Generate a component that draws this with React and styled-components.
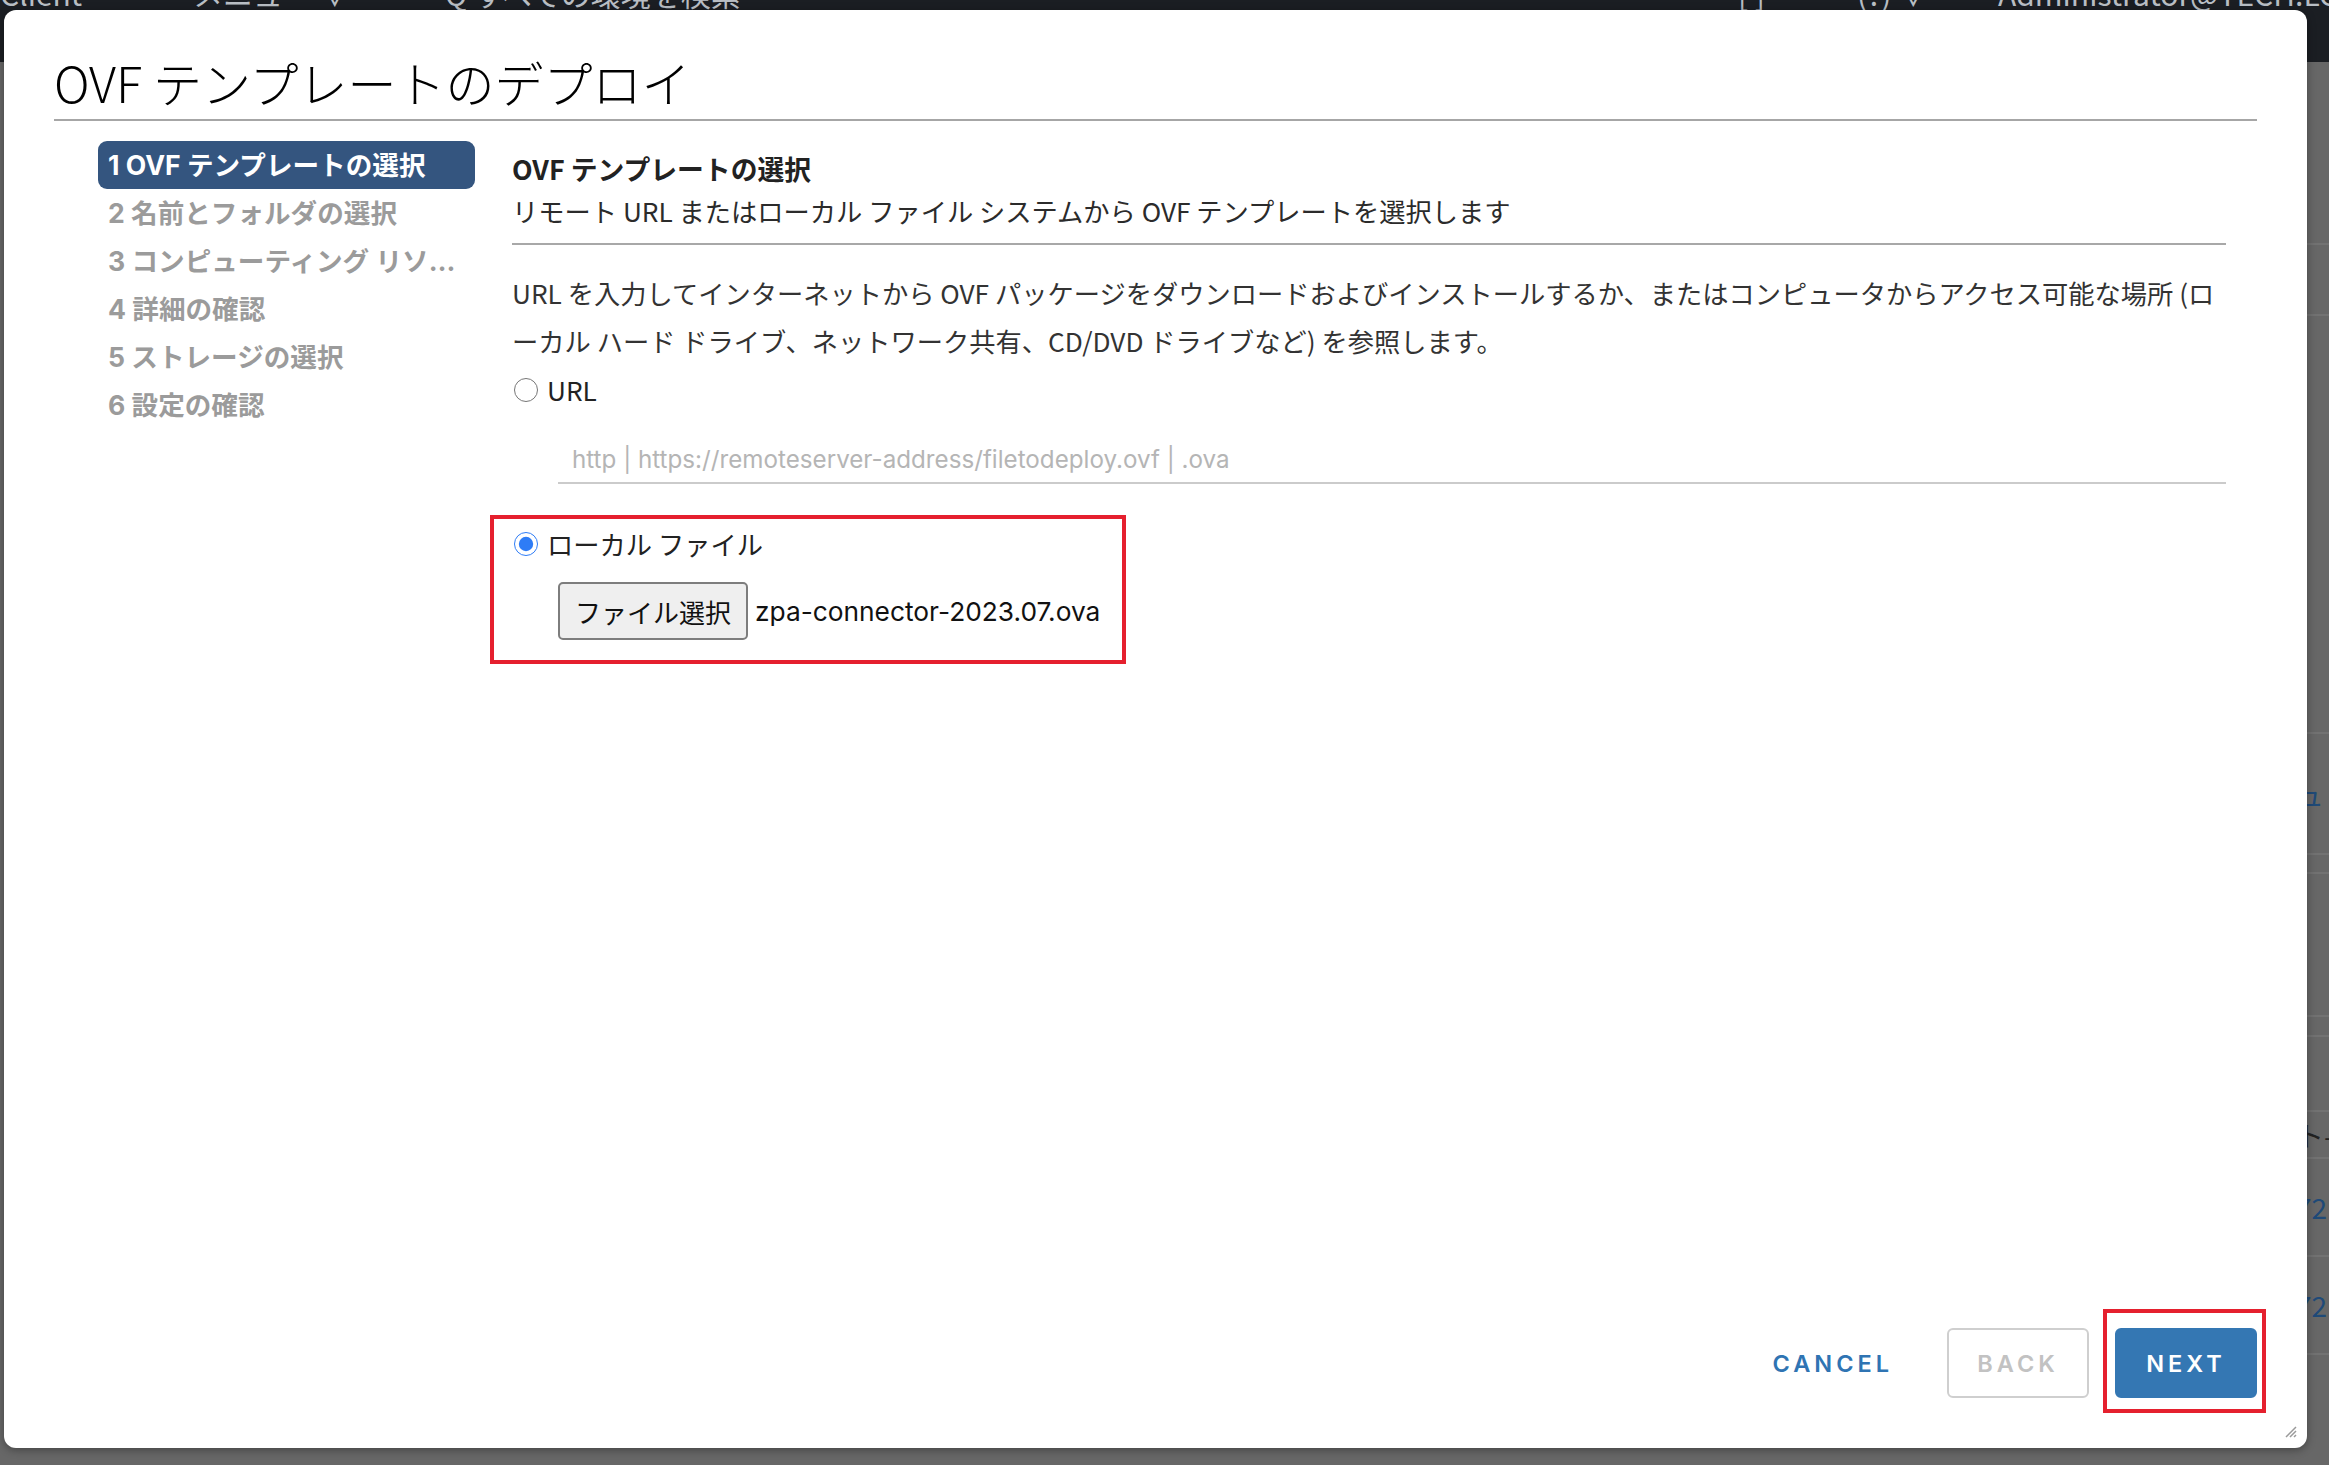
import React from 'react';
import styled, { createGlobalStyle } from 'styled-components';

const GlobalStyle = createGlobalStyle`
  html, body {
    margin: 0;
    padding: 0;
  }
  body {
    width: 2329px;
    height: 1465px;
    overflow: hidden;
    background: #676767;
    font-family: "Noto Sans CJK JP", "Noto Sans", sans-serif;
  }
  * {
    box-sizing: border-box;
  }
`;

const Page = styled.div`
  position: relative;
  width: 2329px;
  height: 1465px;
  display: flex;
  flex-direction: column;
`;

const TopBar = styled.div`
  height: 62px;
  background: #1b1e23;
  display: flex;
  align-items: flex-start;
  overflow: hidden;
  color: #b9bec4;
  font-size: 30px;
  line-height: 30px;
`;

const TopItem = styled.div`
  margin-top: -22px;
  width: ${(p) => (p.w ? `${p.w}px` : 'auto')};
  flex-shrink: 0;
  white-space: nowrap;
`;

const Backdrop = styled.div`
  flex: 1;
  display: flex;
  flex-direction: column;
  padding-left: 2296px;
  color: #1f4a78;
  font-size: 28px;
`;

const BgRow = styled.div`
  height: ${(p) => p.h}px;
  border-bottom: 2px solid #727272;
  display: flex;
  align-items: center;
  white-space: nowrap;
  color: ${(p) => (p.dark ? '#222' : '#1f4a78')};
`;

const Modal = styled.div`
  position: absolute;
  left: 4px;
  top: 10px;
  width: 2303px;
  height: 1438px;
  background: #fff;
  border-radius: 12px;
  box-shadow: 0 2px 8px rgba(0, 0, 0, 0.35);
  padding: 0 50px;
  display: flex;
  flex-direction: column;
`;

const ModalHeader = styled.div`
  padding-top: 45px;
  padding-bottom: 11px;
  border-bottom: 2px solid #a6a6a6;
`;

const Title = styled.h1`
  margin: 0;
  font-size: 49px;
  line-height: 53px;
  font-weight: 300;
  color: #000;
`;

const ModalBody = styled.div`
  display: flex;
  padding-top: 20px;
`;

const StepNav = styled.ul`
  list-style: none;
  margin: 0 0 0 44px;
  padding: 0;
  width: 377px;
  flex-shrink: 0;
`;

const Step = styled.li`
  height: 48px;
  line-height: 48px;
  padding: 0 3px 0 10px;
  border-radius: 9px;
  font-family: "Inter", "Noto Sans CJK JP", sans-serif;
  font-size: 26.6px;
  font-weight: 700;
  white-space: nowrap;
  overflow: hidden;
  text-overflow: ellipsis;
  color: ${(p) => (p.active ? '#fff' : '#9b9b9b')};
  background: ${(p) => (p.active ? '#34557f' : 'transparent')};
`;

const StepContent = styled.div`
  margin-left: 37px;
  width: 1714px;
  padding-top: 10px;
  color: #2b2b2b;
  font-size: 26.25px;
`;

const Heading = styled.h2`
  margin: 0;
  font-size: 26.8px;
  line-height: 36px;
  font-weight: 700;
  color: #222;
`;

const Subtitle = styled.div`
  margin-top: 6px;
  line-height: 36px;
  padding-bottom: 14px;
  border-bottom: 2px solid #a8a8a8;
`;

const Description = styled.p`
  margin: 24px 0 0;
  line-height: 48px;
  color: #333;
`;

const RadioRow = styled.label`
  height: 40px;
  display: flex;
  align-items: center;
  gap: 9px;
  margin-top: ${(p) => p.top || 0}px;
  margin-left: ${(p) => p.indent || 0}px;
  color: #222;
`;

const Radio = styled.input.attrs({ type: 'radio' })`
  width: 24px;
  height: 24px;
  margin: 0;
  accent-color: #2e7cf6;
`;

const UrlInput = styled.input.attrs({
  type: 'text',
  placeholder: 'http | https://remoteserver-address/filetodeploy.ovf | .ova',
})`
  display: block;
  margin: 26px 0 0 46px;
  width: calc(100% - 46px);
  height: 48px;
  padding: 0 14px;
  border: none;
  border-bottom: 2px solid #cbcbcb;
  font-family: "Inter", sans-serif;
  font-size: 24.2px;
  color: #333;
  background: transparent;
  &::placeholder {
    color: #b5b5b5;
  }
  &:focus {
    outline: none;
  }
`;

const Highlight = styled.div`
  margin: 31px 0 0 -22px;
  width: 636px;
  border: 4px solid #e5202e;
  padding: 5px 20px 20px;
`;

const FileRow = styled.div`
  display: flex;
  align-items: center;
  margin-top: 18px;
  padding-left: 44px;
`;

const FileButton = styled.button`
  height: 58px;
  padding: 0 15px;
  background: #efefef;
  border: 2px solid #7d7d7d;
  border-radius: 5px;
  font-family: "Noto Sans CJK JP", sans-serif;
  font-size: 26px;
  color: #111;
`;

const FileName = styled.span`
  margin-left: 7px;
  font-family: "Inter", "Noto Sans", sans-serif;
  font-size: 26.3px;
  color: #111;
`;

const ModalFooter = styled.div`
  margin-top: auto;
  padding-bottom: 50px;
  display: flex;
  justify-content: flex-end;
  align-items: center;
  gap: 26px;
`;

const Button = styled.button`
  height: 70px;
  min-width: 142px;
  padding: 0 26px;
  border-radius: 6px;
  font-family: "Inter", sans-serif;
  font-size: 23.5px;
  font-weight: 600;
  letter-spacing: 4px;
  border: 2px solid ${(p) => (p.variant === 'primary' ? '#3477b3' : p.variant === 'outline' ? '#cfcfcf' : 'transparent')};
  background: ${(p) => (p.variant === 'primary' ? '#3477b3' : '#fff')};
  color: ${(p) => (p.variant === 'primary' ? '#fff' : p.variant === 'outline' ? '#c2c2c2' : '#2f74b3')};
  cursor: pointer;
`;

const Annotation = styled.div`
  display: inline-flex;
  border: 4px solid #e5202e;
  padding: 15px 5px 11px 8px;
  margin: -19px -9px -15px -12px;
`;

const ResizeGrip = styled.svg`
  position: absolute;
  right: 10px;
  bottom: 10px;
`;

const steps = [
  '1 OVF テンプレートの選択',
  '2 名前とフォルダの選択',
  '3 コンピューティング リソースの選択',
  '4 詳細の確認',
  '5 ストレージの選択',
  '6 設定の確認',
];

export default function App() {
  return (
    <Page>
      <GlobalStyle />
      <TopBar>
        <TopItem w={193}>Client</TopItem>
        <TopItem w={252}>メニュー ∨</TopItem>
        <TopItem w={1293}>Q すべての環境を検索</TopItem>
        <TopItem w={119}>[ ]</TopItem>
        <TopItem w={141}>(?) ∨</TopItem>
        <TopItem>Administrator@TECH.LOCAL</TopItem>
      </TopBar>
      <Backdrop>
        <BgRow h={183} />
        <BgRow h={71} />
        <BgRow h={418} />
        <BgRow h={121}>ュ</BgRow>
        <BgRow h={19} />
        <BgRow h={143} />
        <BgRow h={20} />
        <BgRow h={75} />
        <BgRow h={47} dark>ト—</BgRow>
        <BgRow h={98}>72</BgRow>
        <BgRow h={98}>72</BgRow>
      </Backdrop>

      <Modal>
        <ModalHeader>
          <Title>OVF テンプレートのデプロイ</Title>
        </ModalHeader>
        <ModalBody>
          <StepNav>
            {steps.map((s, i) => (
              <Step key={s} active={i === 0}>{s}</Step>
            ))}
          </StepNav>
          <StepContent>
            <Heading>OVF テンプレートの選択</Heading>
            <Subtitle>リモート URL またはローカル ファイル システムから OVF テンプレートを選択します</Subtitle>
            <Description>
              URL を入力してインターネットから OVF パッケージをダウンロードおよびインストールするか、またはコンピュータからアクセス可能な場所 (ローカル ハード ドライブ、ネットワーク共有、CD/DVD ドライブなど) を参照します。
            </Description>
            <RadioRow top={5} indent={2}>
              <Radio name="source" />
              URL
            </RadioRow>
            <UrlInput />
            <Highlight>
              <RadioRow>
                <Radio name="source" defaultChecked />
                ローカル ファイル
              </RadioRow>
              <FileRow>
                <FileButton>ファイル選択</FileButton>
                <FileName>zpa-connector-2023.07.ova</FileName>
              </FileRow>
            </Highlight>
          </StepContent>
        </ModalBody>
        <ModalFooter>
          <Button>CANCEL</Button>
          <Button variant="outline">BACK</Button>
          <Annotation>
            <Button variant="primary">NEXT</Button>
          </Annotation>
        </ModalFooter>
        <ResizeGrip width="14" height="14" viewBox="0 0 14 14">
          <path d="M13 3 L3 13 M13 7 L7 13 M13 11 L11 13" stroke="#9a9a9a" strokeWidth="1.5" />
        </ResizeGrip>
      </Modal>
    </Page>
  );
}
